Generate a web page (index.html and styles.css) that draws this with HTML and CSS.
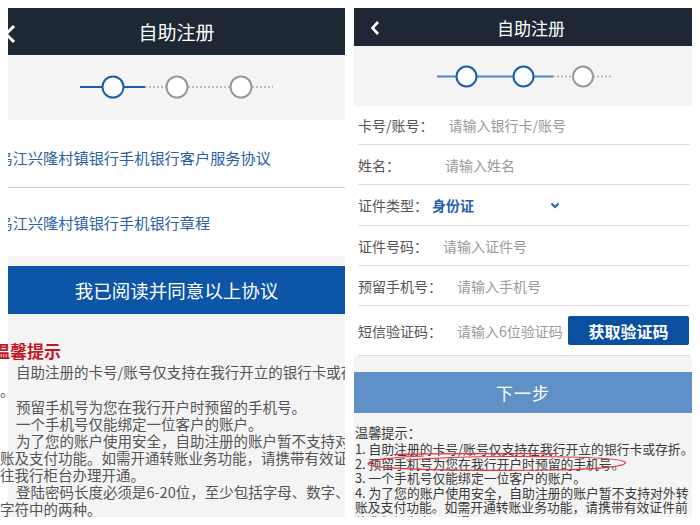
FILE: index.html
```html
<!DOCTYPE html>
<html lang="zh-CN">

<head>
  <meta charset="UTF-8">
  <meta name="viewport" content="width=device-width, initial-scale=1.0">
  <title>自助注册</title>
  <link rel="stylesheet" href="styles.css">
</head>

<body>
  <div class="screens">

    <!-- 第一步：协议 -->
    <section class="phone phone-left">
      <header class="bar bar-tall">
        <a class="back back-cut" href="#0">
          <svg width="14" height="20" viewBox="0 0 14 20"><path d="M11 2 L3 10 L11 18" fill="none" stroke="#fff" stroke-width="3"/></svg>
        </a>
        <h1>自助注册</h1>
      </header>
      <div class="steps">
        <svg width="337" height="65" viewBox="0 0 337 65">
          <path d="M72 32 H94 M116 32 H137" stroke="#1b5eab" stroke-width="2"/>
          <path d="M137 32 H158 M180 32 H222 M244 32 H265" stroke="#aaa" stroke-width="1.5" stroke-dasharray="2 2"/>
          <circle cx="105" cy="32" r="10.5" fill="#fff" stroke="#1b5eab" stroke-width="2"/>
          <circle cx="169" cy="32" r="10.5" fill="#fff" stroke="#999" stroke-width="2"/>
          <circle cx="233" cy="32" r="10.5" fill="#fff" stroke="#999" stroke-width="2"/>
        </svg>
      </div>
      <ul class="agreements">
        <li><span class="cut">乌江兴隆村镇银行手机银行客户服务协议</span><i class="more"></i></li>
        <li><span class="cut">乌江兴隆村镇银行手机银行章程</span><i class="more"></i></li>
      </ul>
      <div class="agree-wrap">
        <button class="btn btn-agree">我已阅读并同意以上协议</button>
      </div>
      <div class="tips tips-left">
        <h3>温馨提示</h3>
        <p><span class="in">自助注册的卡号/账号仅支持在我行开立的银行卡或存折</span><span class="dot">。</span></p>
        <p><span class="in">预留手机号为您在我行开户时预留的手机号。</span></p>
        <p><span class="in">一个手机号仅能绑定一位客户的账户。</span></p>
        <p><span class="in">为了您的账户使用安全，自助注册的账户暂不支持对外转</span><span>账及支付功能。如需开通转账业务功能，请携带有效证件前</span><span>往我行柜台办理开通。</span></p>
        <p><span class="in">登陆密码长度必须是6-20位，至少包括字母、数字、特殊</span><span>字符中的两种。</span></p>
      </div>
    </section>

    <!-- 第二步：填写信息 -->
    <section class="phone phone-right">
      <header class="bar">
        <a class="back" href="#0">
          <svg width="10" height="16" viewBox="0 0 10 16"><path d="M8 2 L2.5 8 L8 14" fill="none" stroke="#fff" stroke-width="2.6"/></svg>
        </a>
        <h1>自助注册</h1>
      </header>
      <div class="steps steps-short">
        <svg width="338" height="60" viewBox="0 0 338 60">
          <path d="M83 30.5 H199" stroke="#4a88cc" stroke-width="2"/>
          <path d="M199 30.5 H219 M239 30.5 H258" stroke="#aaa" stroke-width="1.5" stroke-dasharray="2 2"/>
          <circle cx="112.5" cy="30.5" r="10" fill="#fff" stroke="#1b5eab" stroke-width="2"/>
          <circle cx="169.5" cy="30.5" r="10" fill="#fff" stroke="#1b5eab" stroke-width="2"/>
          <circle cx="229" cy="30.5" r="10" fill="#fff" stroke="#999" stroke-width="2"/>
        </svg>
      </div>
      <form class="form">
        <label class="field field-first"><span class="label">卡号/账号：</span><input placeholder="请输入银行卡/账号"></label>
        <label class="field field-name"><span class="label">姓名：</span><input placeholder="请输入姓名"></label>
        <div class="field field-select">
          <span class="label">证件类型：</span>
          <span class="select">身份证
            <svg width="10" height="7" viewBox="0 0 10 7"><path d="M1.5 1.5 L5 5 L8.5 1.5" fill="none" stroke="#1f5fae" stroke-width="2"/></svg>
          </span>
        </div>
        <label class="field"><span class="label">证件号码：</span><input placeholder="请输入证件号"></label>
        <label class="field"><span class="label">预留手机号：</span><input placeholder="请输入手机号"></label>
        <div class="field field-sms">
          <span class="label">短信验证码：</span><input placeholder="请输入6位验证码">
          <button type="button" class="btn btn-code">获取验证码</button>
        </div>
      </form>
      <div class="next-wrap">
        <button class="btn btn-next">下一步</button>
      </div>
      <div class="tips tips-right">
        <h3>温馨提示：</h3>
        <p>1. 自助注册的卡号/账号仅支持在我行开立的银行卡或存折。</p>
        <p>2. 预留手机号为您在我行开户时预留的手机号。</p>
        <p>3. 一个手机号仅能绑定一位客户的账户。</p>
        <p>4. 为了您的账户使用安全，自助注册的账户暂不支持对外转</p>
        <p>账及支付功能。如需开通转账业务功能，请携带有效证件前</p>
        <p>往我行柜台办理开通。</p>
        <!-- 红笔圈注 -->
        <svg class="marks" width="338" height="70" viewBox="0 0 338 70">
          <path d="M40 41.5 C80 40 140 41 205 40.5" fill="none" stroke="#e2333d" stroke-width="1.1"/>
          <path d="M70 43 C40 44 14 47 14 51 C16 57 120 58 200 57 C250 56 275 53 271 49 C266 45 220 43.5 160 43.5 C120 43.5 90 44 52 47" fill="none" stroke="#e2333d" stroke-width="1.1"/>
        </svg>
      </div>
    </section>

  </div>
</body>

</html>
```

FILE: styles.css
```css
body {
  margin: 0;
  background: #fff;
  font-family: "Noto Sans CJK SC", "Noto Sans", sans-serif;
  overflow: hidden;
}

.screens {
  display: flex;
  gap: 9px;
  height: 517px;
  padding: 8px 0 0 8px;
  box-sizing: border-box;
}

.phone {
  display: flex;
  flex-direction: column;
  background: #f4f4f4;
}

.phone-left {
  width: 337px;
}

.phone-right {
  width: 338px;
}

/* 顶栏 */
.bar {
  display: grid;
  grid-template-columns: 1fr auto 1fr;
  align-items: center;
  height: 38px;
  padding-left: 16px;
  background: #1e2835;
  color: #fff;
  font-size: 17px;
}

.bar h1 {
  margin: 0;
  font-size: inherit;
  font-weight: normal;
  line-height: 1;
}

.bar .back {
  display: flex;
  padding-top: 1px;
}

.bar-tall {
  height: 47px;
  padding-left: 0;
  font-size: 19px;
  overflow: hidden;
}

.bar-tall .back {
  margin-left: -5px;
  padding-top: 4px;
}

/* 步骤 */
.steps {
  display: flex;
  height: 65px;
}

.steps-short {
  height: 60px;
}

/* 协议列表 */
.agreements {
  margin: 0;
  padding: 0;
  list-style: none;
  background: #fff;
}

.agreements > li {
  display: flex;
  align-items: center;
  justify-content: space-between;
  height: 68px;
  box-sizing: border-box;
  overflow: hidden;
  color: #2a60a6;
  font-size: 15.2px;
  white-space: nowrap;
}

.agreements > li:first-child {
  padding-top: 6px;
  border-bottom: 1px solid #cfcfcf;
}

.agreements .cut {
  margin-left: -10.5px;
}

.agreements .more {
  width: 9px;
  height: 9px;
  margin-right: -9px;
  border-top: 2px solid #c4c4c4;
  border-right: 2px solid #c4c4c4;
  transform: rotate(45deg);
}

/* 按钮 */
.btn {
  border: none;
  color: #fff;
  font-family: inherit;
  cursor: pointer;
}

.agree-wrap {
  padding-top: 10px;
}

.btn-agree {
  display: block;
  width: 100%;
  height: 48px;
  background: #0c55a7;
  font-size: 18.5px;
}

.next-wrap {
  padding-top: 16px;
}

.btn-next {
  display: block;
  width: 100%;
  height: 41px;
  background: #5f91c6;
  font-size: 17px;
  letter-spacing: 1px;
}

/* 提示 */
.tips {
  flex: 1;
  overflow: hidden;
}

.tips h3,
.tips p {
  margin: 0;
  font-weight: normal;
  white-space: nowrap;
}

.tips-left {
  margin-left: -8px;
  padding-top: 27px;
  color: #555;
  font-size: 14.5px;
  line-height: 17px;
}

.tips-left h3 {
  margin-left: -7px;
  margin-bottom: 2px;
  color: #c4161f;
  font-size: 17px;
  font-weight: bold;
  line-height: 20px;
}

.tips-left p > span {
  display: block;
}

.tips-left .in {
  text-indent: 16px;
}

.tips-left .dot {
  padding-top: 1px;
}

.tips-right {
  position: relative;
  padding: 12px 0 0 1px;
  color: #3a3a3a;
  font-size: 12.8px;
  line-height: 14.6px;
}

.tips-right h3 {
  font-size: 13.2px;
  line-height: 16px;
  margin-bottom: 1px;
}

.tips-right .marks {
  position: absolute;
  top: 0;
  left: 0;
  pointer-events: none;
}

/* 表单 */
.form {
  margin: 0;
  padding: 0 2px 0 4px;
  background: #fff;
}

.field {
  display: flex;
  align-items: center;
  gap: 15px;
  height: 40px;
  box-sizing: border-box;
  border-bottom: 1px solid #dcdcdc;
  color: #555;
  font-size: 14px;
}

.field-first {
  height: 39px;
}

.field-name .label {
  margin-right: 30px;
}

.field-sms {
  height: 50px;
  gap: 0;
}

.field-sms .label {
  margin-right: 15px;
}

.field input {
  flex: 1;
  min-width: 0;
  padding: 0;
  border: none;
  outline: none;
  background: transparent;
  color: #333;
  font-family: inherit;
  font-size: 14px;
}

.field input::placeholder {
  color: #9a9a9a;
}

.field-select {
  height: 41px;
  gap: 4px;
}

.select {
  display: flex;
  align-items: center;
  justify-content: space-between;
  width: 128px;
  color: #1f5fae;
  font-weight: bold;
}

.btn-code {
  flex: none;
  width: 121px;
  height: 29px;
  margin-right: 1px;
  border-radius: 2px;
  background: #0b4f9f;
  font-size: 16px;
  font-weight: bold;
}
```
